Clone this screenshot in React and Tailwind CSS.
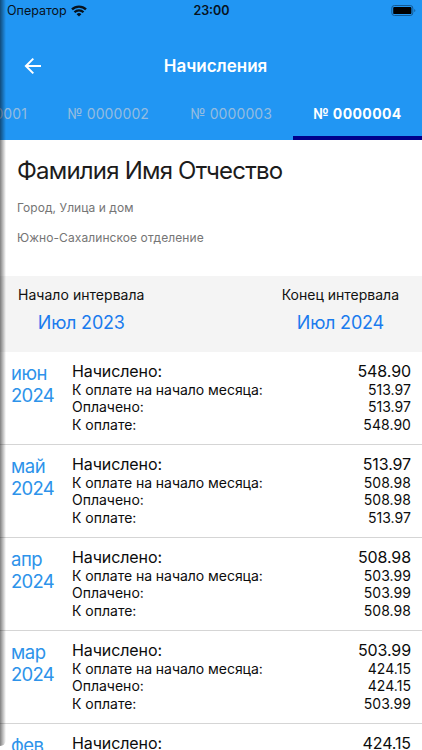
const tabs = [
  { label: "№ 0000001", width: "w-[48px]" },
  { label: "№ 0000002", width: "w-[122px]" },
  { label: "№ 0000003", width: "w-[123px]" },
];

const charges = [
  { month: "июн", year: "2024", charged: "548.90", opening: "513.97", paid: "513.97", due: "548.90" },
  { month: "май", year: "2024", charged: "513.97", opening: "508.98", paid: "508.98", due: "513.97" },
  { month: "апр", year: "2024", charged: "508.98", opening: "503.99", paid: "503.99", due: "508.98" },
  { month: "мар", year: "2024", charged: "503.99", opening: "424.15", paid: "424.15", due: "503.99" },
  { month: "фев", year: "2024", charged: "424.15", opening: "419.16", paid: "419.16", due: "424.15" },
];

const StatusBar = () => (
  <div className="grid h-[22px] grid-cols-3 items-center pl-[7px] pr-[6px] text-[#07121d]">
    <div className="flex items-center gap-[4px]">
      <span className="text-[12.5px] leading-4">Оператор</span>
      <svg width="16" height="12" viewBox="0 0 16 12" fill="none" stroke="currentColor" strokeWidth="2.3">
        <path d="M1 4.4a10 10 0 0 1 14 0" />
        <path d="M3.5 7.2a6.3 6.3 0 0 1 9 0" />
        <path d="M8 11.6 5.6 9.2a3.4 3.4 0 0 1 4.8 0z" fill="currentColor" stroke="none" />
      </svg>
    </div>
    <span className="text-center text-[12.5px] font-semibold leading-4">23:00</span>
    <svg className="justify-self-end" width="25" height="12" viewBox="0 0 25 12">
      <rect x="0.8" y="0.5" width="21" height="10" rx="2.6" fill="none" stroke="#145a94" />
      <rect x="2.2" y="1.9" width="18.2" height="7.2" rx="1.2" fill="#000" />
      <path d="M23.3 3.9v3.2c1.4-.5 1.4-2.7 0-3.2z" fill="#145a94" />
    </svg>
  </div>
);

const ChargeRow = ({ item }) => (
  <div className="flex h-[93px] shrink-0 border-b border-[#d5d5d5] pl-[11px] pr-[11px] pt-[9px]">
    <div className="w-[61px] shrink-0 pt-[1px] text-[18.5px] leading-[22px] tracking-[-0.7px] text-[#2d93ea]">
      <div className="tracking-[-0.5px]">{item.month}</div>
      <div>{item.year}</div>
    </div>
    <div className="flex-1 text-[14px] leading-[17.4px] text-[#0c0c0c]">
      <div className="flex justify-between text-[16px] leading-[20px] tracking-[-0.1px]">
        <span>Начислено:</span>
        <span>{item.charged}</span>
      </div>
      <div className="flex justify-between">
        <span className="tracking-[-0.04px]">К оплате на начало месяца:</span>
        <span className="tracking-[0.05px]">{item.opening}</span>
      </div>
      <div className="flex justify-between">
        <span>Оплачено:</span>
        <span className="tracking-[0.05px]">{item.paid}</span>
      </div>
      <div className="flex justify-between">
        <span>К оплате:</span>
        <span className="tracking-[0.05px]">{item.due}</span>
      </div>
    </div>
  </div>
);

const App = () => {
  return (
    <div className="relative flex h-[750px] w-[422px] flex-col overflow-hidden whitespace-nowrap bg-white font-['Inter','Liberation_Sans',sans-serif]">
      {/* Header */}
      <div className="h-[140px] shrink-0 bg-[#2196f3]">
        <StatusBar />
        <div className="grid h-[66px] grid-cols-[1fr_auto_1fr] items-center pb-[2px] pl-[9px] pt-[24px]">
          <svg className="ml-[15px]" width="18" height="18" viewBox="0 0 18 18" fill="none" stroke="#fff" strokeWidth="2">
            <path d="M17 9H2M9.3 1.6 1.9 9l7.4 7.4" />
          </svg>
          <span className="text-[17px] font-semibold leading-[22px] text-white">Начисления</span>
          <span />
        </div>
        <div className="flex h-[52px] text-[14px] tracking-[0.1px]">
          {tabs.map((tab) => (
            <div
              key={tab.label}
              className={`${tab.width} flex shrink-0 items-center justify-end pb-0.5 pr-[21px] text-[#94bce0]`}
            >
              {tab.label}
            </div>
          ))}
          <div className="flex flex-1 items-center justify-center border-b-4 border-[#00008b] pt-0.5 font-bold tracking-[0.4px] text-white">
            № 0000004
          </div>
        </div>
      </div>

      {/* Account owner */}
      <div className="h-[136px] shrink-0 pl-[17px] pt-[15px]">
        <h1 className="text-[24px] leading-[32px] tracking-[-0.8px] text-[#1c1c1c]">Фамилия Имя Отчество</h1>
        <p className="mt-[13px] text-[12px] leading-4 tracking-[0.06px] text-[#757575]">Город, Улица и дом</p>
        <p className="mt-[14px] text-[12px] leading-4 tracking-[0.08px] text-[#757575]">Южно-Сахалинское отделение</p>
      </div>

      {/* Interval */}
      <div className="flex h-[76px] shrink-0 justify-between bg-[#f4f4f4] pl-[18px] pr-[23px] pt-[9px] text-center">
        <div>
          <div className="text-[14px] leading-5 tracking-[0.04px] text-[#111]">Начало интервала</div>
          <div className="mt-[6px] text-[18px] leading-6 tracking-[-0.2px] text-[#1a7bee]">Июл 2023</div>
        </div>
        <div>
          <div className="text-[14px] leading-5 text-[#111]">Конец интервала</div>
          <div className="mt-[6px] text-[18px] leading-6 tracking-[-0.2px] text-[#1a7bee]">Июл 2024</div>
        </div>
      </div>

      {/* Charges by month */}
      <div className="flex flex-1 flex-col overflow-hidden">
        {charges.map((item) => (
          <ChargeRow key={item.month} item={item} />
        ))}
      </div>

      {/* Edge shadow */}
      <div className="pointer-events-none absolute left-0 top-0 h-[746px] w-[6px] rounded-br-full bg-linear-to-r from-black/50 to-transparent" />
    </div>
  );
};

export default App;
